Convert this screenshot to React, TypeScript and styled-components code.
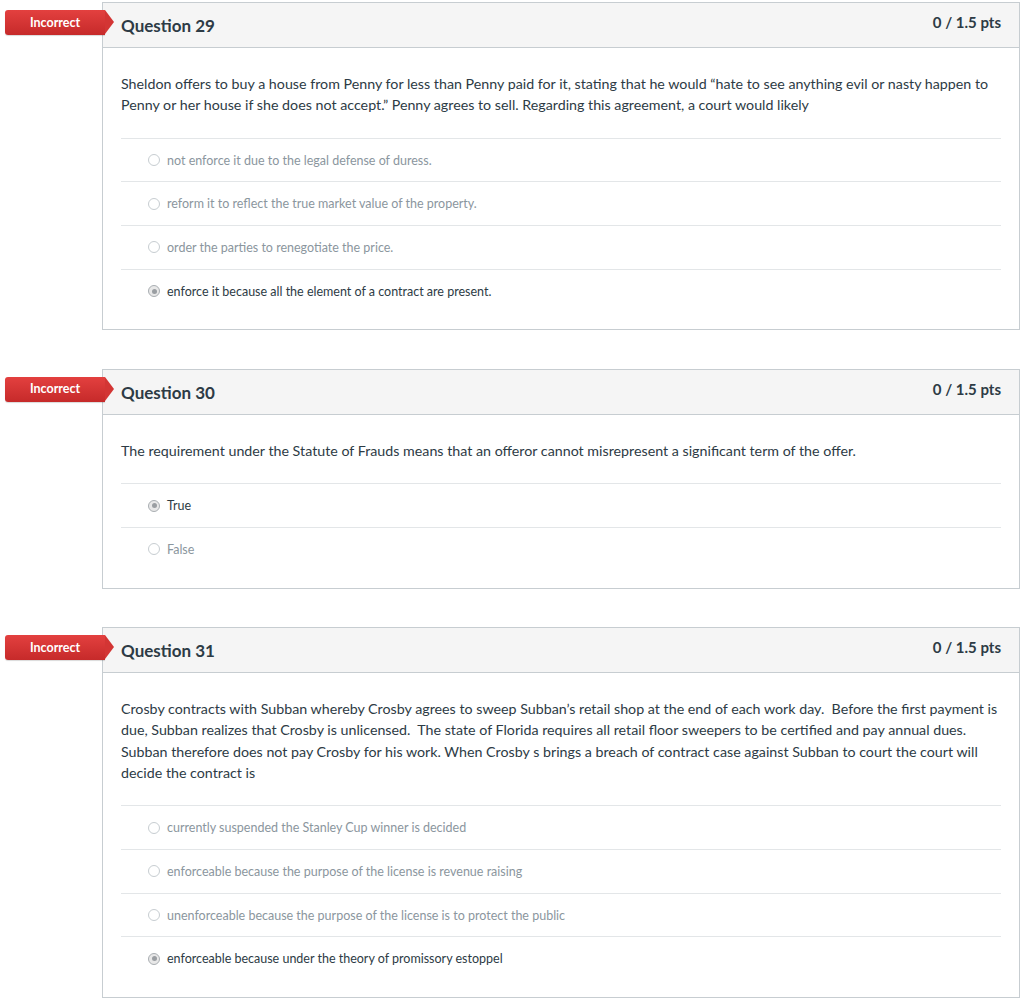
import React from "react";
import styled, { createGlobalStyle } from "styled-components";

const GlobalStyle = createGlobalStyle`
  html, body { margin: 0; padding: 0; background: #ffffff; }
  body { font-family: Lato, "Open Sans", "Liberation Sans", sans-serif; color: #2d3b45; }
`;

const Page = styled.div`
  padding: 2px 4px 0 102px;
  display: flex;
  flex-direction: column;
  gap: 38.5px;
`;

const Card = styled.section`
  position: relative;
  width: 918px;
  border: 1px solid #c7cdd1;
  box-sizing: border-box;
  background: #fff;
`;

const Badge = styled.div`
  position: absolute;
  left: -98px;
  top: 7px;
  width: 100px;
  height: 25px;
  background: linear-gradient(#e3403f, #c62a2a);
  color: #fff;
  font-size: 12.5px;
  font-weight: 700;
  display: flex;
  align-items: center;
  justify-content: center;
  border-radius: 3px 0 0 3px;
  box-shadow: 0 1px 1px rgba(0,0,0,0.15);
  padding-bottom: 1px;
  box-sizing: border-box;
  &::after {
    content: "";
    position: absolute;
    right: -9px;
    top: 0;
    border-top: 12.5px solid transparent;
    border-bottom: 12.5px solid transparent;
    border-left: 9px solid #d33534;
  }
`;

const Header = styled.header`
  height: 44px;
  background: #f5f5f5;
  border-bottom: 1px solid #c7cdd1;
  display: flex;
  justify-content: space-between;
  padding: 0 18px;
`;

const Title = styled.h2`
  margin: 0;
  font-size: 17px;
  font-weight: 700;
  color: #2d3b45;
  align-self: center;
  padding-top: 1px;
`;

const Points = styled.div`
  font-size: 15px;
  font-weight: 700;
  color: #2d3b45;
  padding-top: 10px;
`;

const Body = styled.div`
  padding: 25px 18px 17px 18px;
`;

const QuestionText = styled.p`
  margin: 0 0 22px 0;
  font-size: 14.25px;
  line-height: 21.33px;
  color: #2d3b45;
`;

const Answers = styled.ul`
  list-style: none;
  margin: 0;
  padding: 0;
`;

const Answer = styled.li<{ $selected?: boolean }>`
  border-top: 1px solid #e3e6e8;
  height: 42.7px;
  display: flex;
  align-items: center;
  padding-left: 27px;
  gap: 7px;
  font-size: 12.5px;
  color: ${(p) => (p.$selected ? "#2d3b45" : "#8b969e")};
`;

const Radio = styled.span<{ $selected?: boolean }>`
  width: 12px;
  height: 12px;
  border-radius: 50%;
  box-sizing: border-box;
  border: 1px solid ${(p) => (p.$selected ? "#a9aeb2" : "#c7cdd1")};
  background: ${(p) => (p.$selected ? "#e8e8e8" : "#fff")};
  display: flex;
  align-items: center;
  justify-content: center;
  flex-shrink: 0;
  &::after {
    content: "";
    width: 5px;
    height: 5px;
    border-radius: 50%;
    background: ${(p) => (p.$selected ? "#9a9ea2" : "transparent")};
  }
`;

type Q = {
  num: number;
  text: string;
  answers: string[];
  selected: number;
};

const questions: Q[] = [
  {
    num: 29,
    text:
      "Sheldon offers to buy a house from Penny for less than Penny paid for it, stating that he would \u201chate to see anything evil or nasty happen to Penny or her house if she does not accept.\u201d Penny agrees to sell. Regarding this agreement, a court would likely",
    answers: [
      "not enforce it due to the legal defense of duress.",
      "reform it to reflect the true market value of the property.",
      "order the parties to renegotiate the price.",
      "enforce it because all the element of a contract are present.",
    ],
    selected: 3,
  },
  {
    num: 30,
    text:
      "The requirement under the Statute of Frauds means that an offeror cannot misrepresent a significant term of the offer.",
    answers: ["True", "False"],
    selected: 0,
  },
  {
    num: 31,
    text:
      "Crosby contracts with Subban whereby Crosby agrees to sweep Subban\u2019s retail shop at the end of each work day.\u00a0 Before the first payment is due, Subban realizes that Crosby is unlicensed.\u00a0 The state of Florida requires all retail floor sweepers to be certified and pay annual dues.\u00a0 Subban therefore does not pay Crosby for his work. When Crosby s brings a breach of contract case against Subban to court the court will decide the contract is",
    answers: [
      "currently suspended the Stanley Cup winner is decided",
      "enforceable because the purpose of the license is revenue raising",
      "unenforceable because the purpose of the license is to protect the public",
      "enforceable because under the theory of promissory estoppel",
    ],
    selected: 3,
  },
];

export default function App() {
  return (
    <>
      <GlobalStyle />
      <Page>
        {questions.map((q) => (
          <Card key={q.num}>
            <Badge>Incorrect</Badge>
            <Header>
              <Title>Question {q.num}</Title>
              <Points>0 / 1.5 pts</Points>
            </Header>
            <Body>
              <QuestionText>{q.text}</QuestionText>
              <Answers>
                {q.answers.map((a, i) => (
                  <Answer key={i} $selected={i === q.selected}>
                    <Radio $selected={i === q.selected} />
                    {a}
                  </Answer>
                ))}
              </Answers>
            </Body>
          </Card>
        ))}
      </Page>
    </>
  );
}
